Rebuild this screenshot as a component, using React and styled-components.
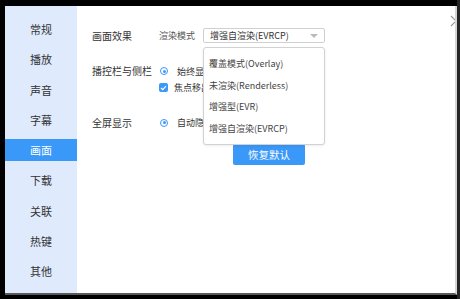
import React from "react";
import styled, { createGlobalStyle } from "styled-components";

const Global = createGlobalStyle`
  html, body { margin: 0; padding: 0; background: #000; }
  body { font-family: "Noto Sans CJK SC", "Noto Sans", sans-serif; }
  * { box-sizing: border-box; }
`;

const Screen = styled.div`
  width: 460px;
  height: 299px;
  background: #000;
  display: flex;
  align-items: flex-start;
  padding: 6px 0 0 5px;
  overflow: hidden;
`;

const Window = styled.div`
  position: relative;
  width: 452px;
  height: 289px;
  display: flex;
  background: #fff;
  border-right: 2px solid #d6d6d6;
  border-bottom: 2px solid #5a5a5a;
  overflow: hidden;
`;

const RightShade = styled.div`
  width: 3px;
  height: 299px;
  margin-top: -6px;
  background: #262626;
`;

const Sidebar = styled.nav`
  width: 72px;
  flex: none;
  background: #dfeafd;
  display: flex;
  flex-direction: column;
  gap: 8.25px;
  padding-top: 12px;
`;

const NavItem = styled.div`
  height: 22px;
  display: flex;
  align-items: center;
  justify-content: center;
  font-size: 11px;
  color: ${p => (p.$active ? "#fff" : "#333")};
  background: ${p => (p.$active ? "#3a98f8" : "transparent")};
`;

const Content = styled.div`
  flex: 1;
  padding: 22px 0 0 15px;
  display: flex;
  flex-direction: column;
`;

const Form = styled.div`
  display: grid;
  grid-template-columns: 67px 1fr;
  row-gap: 21px;
  align-items: start;
`;

const Label = styled.div`
  font-size: 10px;
  color: #333;
  height: ${p => p.$h || 14}px;
  line-height: ${p => p.$h || 14}px;
  white-space: nowrap;
`;

const Controls = styled.div`
  display: flex;
  flex-direction: column;
  gap: 2.5px;
`;

const Line = styled.div`
  display: flex;
  align-items: center;
  height: ${p => p.$h || 14}px;
  font-size: 9px;
  color: #333;
  white-space: nowrap;
  gap: ${p => p.$gap || 8}px;
`;

const SubLabel = styled.span`
  color: #555;
  font-size: 9px;
`;

const SelectWrap = styled.div`
  position: relative;
  width: 122px;
`;

const SelectBox = styled.div`
  height: 15px;
  border: 1px solid #d0d0d0;
  border-radius: 2px;
  display: flex;
  align-items: center;
  justify-content: space-between;
  padding: 0 6px 0 6px;
  font-size: 9px;
  color: #333;
  background: #fff;
`;

const Caret = styled.span`
  width: 0;
  height: 0;
  border-left: 4px solid transparent;
  border-right: 4px solid transparent;
  border-top: 4px solid #bbb;
`;

const Dropdown = styled.ul`
  position: absolute;
  z-index: 5;
  top: 19px;
  left: 0;
  width: 122px;
  margin: 0;
  padding: 5px 0;
  list-style: none;
  background: #fff;
  border: 1px solid #d2d2d2;
  border-radius: 3px;
  box-shadow: 0 1px 3px rgba(0, 0, 0, 0.08);
`;

const Option = styled.li`
  height: 21.5px;
  display: flex;
  align-items: center;
  padding-left: 5px;
  font-size: 9px;
  color: #444;
  white-space: nowrap;
`;

const Radio = styled.span`
  width: 8px;
  height: 8px;
  border-radius: 50%;
  border: 1.5px solid #3a98f8;
  display: flex;
  align-items: center;
  justify-content: center;
  flex: none;
  margin-left: 1px;
  &::after {
    content: "";
    width: 3px;
    height: 3px;
    border-radius: 50%;
    background: #3a98f8;
  }
`;

const Check = styled.span`
  width: 9px;
  height: 9px;
  border-radius: 2px;
  background: #3a98f8;
  display: flex;
  align-items: center;
  justify-content: center;
  flex: none;
`;

const ResetButton = styled.button`
  margin: 14px 0 0 141px;
  width: 72px;
  height: 21px;
  border: none;
  border-radius: 2px;
  background: #3a98f8;
  color: #fff;
  font-family: inherit;
  font-size: 10.5px;
  padding: 0;
`;

const Close = styled.svg`
  position: absolute;
  top: 9px;
  right: -7px;
`;

const navItems = ["常规", "播放", "声音", "字幕", "画面", "下载", "关联", "热键", "其他"];
const options = ["覆盖模式(Overlay)", "未渲染(Renderless)", "增强型(EVR)", "增强自渲染(EVRCP)"];

export default function App() {
  return (
    <>
      <Global />
      <Screen>
        <Window>
          <Sidebar>
            {navItems.map(n => (
              <NavItem key={n} $active={n === "画面"}>{n}</NavItem>
            ))}
          </Sidebar>
          <Content>
            <Form>
              <Label $h={15}>画面效果</Label>
              <Line $gap={8} $h={15}>
                <SubLabel>渲染模式</SubLabel>
                <SelectWrap>
                  <SelectBox>
                    <span>增强自渲染(EVRCP)</span>
                    <Caret />
                  </SelectBox>
                  <Dropdown>
                    {options.map(o => (
                      <Option key={o}>{o}</Option>
                    ))}
                  </Dropdown>
                </SelectWrap>
              </Line>

              <Label>播控栏与侧栏</Label>
              <Controls>
                <Line $gap={9}>
                  <Radio />
                  <span>始终显示</span>
                </Line>
                <Line $gap={6}>
                  <Check>
                    <svg width="7" height="6" viewBox="0 0 7 6">
                      <path d="M1 3 L2.8 4.7 L6 1.2" fill="none" stroke="#fff" strokeWidth="1.2" />
                    </svg>
                  </Check>
                  <span>焦点移出时隐藏</span>
                </Line>
              </Controls>

              <Label>全屏显示</Label>
              <Line $gap={9}>
                <Radio />
                <span>自动隐藏</span>
              </Line>
            </Form>
            <ResetButton>恢复默认</ResetButton>
          </Content>
          <Close width="12" height="12" viewBox="0 0 12 12">
            <path d="M1 1 L11 11 M11 1 L1 11" stroke="#999" strokeWidth="1.2" />
          </Close>
        </Window>
        <RightShade />
      </Screen>
    </>
  );
}
